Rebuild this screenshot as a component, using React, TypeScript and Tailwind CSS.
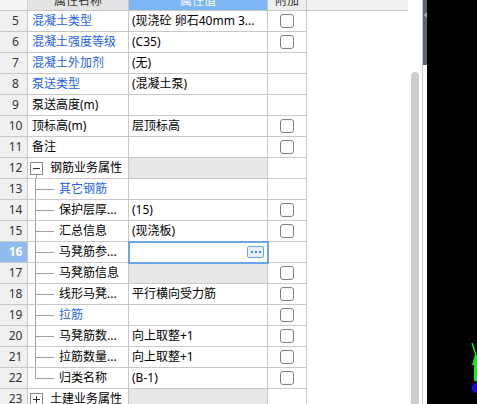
type Row = {
  n: number
  name: string
  value?: string
  blue?: boolean
  check?: boolean
  child?: boolean
  last?: boolean
  group?: 'minus' | 'plus'
  grayValue?: boolean
  selected?: boolean
}

const rows: Row[] = [
  { n: 5, name: '混凝土类型', value: '(现浇砼 卵石40mm 3...', blue: true, check: true },
  { n: 6, name: '混凝土强度等级', value: '(C35)', blue: true, check: true },
  { n: 7, name: '混凝土外加剂', value: '(无)', blue: true },
  { n: 8, name: '泵送类型', value: '(混凝土泵)', blue: true },
  { n: 9, name: '泵送高度(m)' },
  { n: 10, name: '顶标高(m)', value: '层顶标高', check: true },
  { n: 11, name: '备注', check: true },
  { n: 12, name: '钢筋业务属性', group: 'minus', grayValue: true },
  { n: 13, name: '其它钢筋', blue: true, child: true },
  { n: 14, name: '保护层厚...', value: '(15)', check: true, child: true },
  { n: 15, name: '汇总信息', value: '(现浇板)', check: true, child: true },
  { n: 16, name: '马凳筋参...', child: true, selected: true },
  { n: 17, name: '马凳筋信息', grayValue: true, check: true, child: true },
  { n: 18, name: '线形马凳...', value: '平行横向受力筋', check: true, child: true },
  { n: 19, name: '拉筋', blue: true, check: true, child: true },
  { n: 20, name: '马凳筋数...', value: '向上取整+1', check: true, child: true },
  { n: 21, name: '拉筋数量...', value: '向上取整+1', check: true, child: true },
  { n: 22, name: '归类名称', value: '(B-1)', check: true, child: true, last: true },
  { n: 23, name: '土建业务属性', group: 'plus', grayValue: true },
]

function GroupBox({ sign, line }: { sign: 'minus' | 'plus'; line: boolean }) {
  return (
    <div className="ml-[2px] w-[13px] h-full flex flex-col items-center">
      <div className="flex-1" />
      <div className="w-[13px] h-[13px] border border-[#8a8a8a] bg-white flex items-center justify-center relative">
        <div className="w-[7px] h-px bg-[#333]" />
        {sign === 'plus' && <div className="absolute w-px h-[7px] bg-[#333]" />}
      </div>
      <div className={line ? 'flex-1 w-px bg-[#a0a0a0]' : 'flex-1'} />
    </div>
  )
}

function TreeLine({ last }: { last?: boolean }) {
  return (
    <div className="ml-[7px] w-[19px] h-full flex flex-col">
      <div className="flex-1 border-l border-b border-[#a0a0a0]" />
      <div className={last ? 'flex-1' : 'flex-1 border-l border-[#a0a0a0]'} />
    </div>
  )
}

export default function App() {
  return (
    <div
      className="flex w-[477px] h-[404px] overflow-hidden bg-white text-[12px] text-black"
      style={{ fontFamily: '"Noto Sans", "Noto Sans CJK SC", sans-serif' }}
    >
      <div className="w-[408px] h-full flex flex-col overflow-hidden">
        <div className="h-[11px] overflow-hidden border-b border-[#c8c8c8] bg-[#f0f0f0] shrink-0">
          <div className="flex h-[18px] -mt-[8px] items-center leading-none">
            <div className="w-[28px] h-full bg-[#f4f4f4] border-r border-[#d4d4d4]" />
            <div className="w-[101px] h-full bg-[#e4e4e4] border-r border-[#c8c8c8] flex items-center justify-center text-[#333]">
              属性名称
            </div>
            <div className="w-[139px] h-full bg-[#7db6f5] border-r border-[#c8c8c8] flex items-center justify-center text-white">
              属性值
            </div>
            <div className="w-[39px] h-full bg-[#eeeeee] border-r border-[#c8c8c8] flex items-center justify-center text-[#333]">
              附加
            </div>
          </div>
        </div>
        {rows.map((r) => (
          <div key={r.n} className="flex h-[21px] shrink-0 leading-none">
            <div
              className={
                r.selected
                  ? 'w-[28px] h-full border-r border-b border-[#c8c8c8] bg-[#8fbcef] text-white font-bold flex items-center justify-center pl-[4px]'
                  : 'w-[28px] h-full border-r border-b border-[#c8c8c8] bg-[#f0f0f0] text-[#333] flex items-center justify-center pl-[4px]'
              }
            >
              {r.n}
            </div>
            <div className="w-[101px] h-full border-r border-b border-[#c8c8c8] flex items-center whitespace-nowrap">
              {r.group && <GroupBox sign={r.group} line={r.group === 'minus'} />}
              {r.child && <TreeLine last={r.last} />}
              <span
                className={
                  (r.blue ? 'text-[#1f5fe6] ' : 'text-black ') +
                  (r.group ? 'ml-[7px]' : r.child ? 'ml-[5px]' : 'ml-[4px]')
                }
              >
                {r.name}
              </span>
            </div>
            <div
              className={
                r.selected
                  ? 'relative z-10 w-[139px] h-full border-r border-b border-[#c8c8c8] bg-white outline-2 outline-[#6ba7e8] -outline-offset-1 flex items-center justify-end pr-[3px]'
                  : r.grayValue
                    ? 'w-[139px] h-full border-r border-b border-[#c8c8c8] bg-[#e8e8e8]'
                    : 'w-[139px] h-full border-r border-b border-[#c8c8c8] flex items-center pl-[3px] whitespace-nowrap'
              }
            >
              {r.selected ? (
                <div className="w-[17px] h-[12px] rounded-[2px] border border-[#6ba7e8] bg-[#e6f0fc] flex items-center justify-center gap-[2px]">
                  <div className="w-[2px] h-[2px] bg-[#4a8ad8]" />
                  <div className="w-[2px] h-[2px] bg-[#4a8ad8]" />
                  <div className="w-[2px] h-[2px] bg-[#4a8ad8]" />
                </div>
              ) : (
                r.value
              )}
            </div>
            <div className="w-[39px] h-full border-r border-b border-[#c8c8c8] flex items-center justify-center">
              {r.check && <div className="w-[14px] h-[14px] rounded-[3px] border border-[#808080] bg-white" />}
            </div>
          </div>
        ))}
      </div>
      <div className="w-[12px] h-full pl-[3px] pt-[72px]">
        <div className="w-[8px] h-full rounded-t-full bg-[#cdcdcd]" />
      </div>
      <div className="w-[2px] h-full" />
      <div className="w-px h-full bg-[#c8c8c8]" />
      <div className="w-[4px] h-full flex flex-col">
        <div className="h-[65px] bg-[#5c6570] flex flex-col items-center pt-[12px]">
          <div className="w-0 h-0 border-y-[3px] border-y-transparent border-r-[3px] border-r-[#aab2bc]" />
        </div>
      </div>
      <div className="flex-1 h-full bg-black flex flex-col justify-end items-end pb-[11px]">
        <svg width="6" height="50" viewBox="0 0 6 50">
          <path d="M1 0 L5 12 L5 38" stroke="#1ee61e" strokeWidth="1.5" fill="none" />
          <path d="M4 12 L6 12 L6 38 L3 38 L3 22 L1 22 Z" fill="#1ee61e" />
          <ellipse cx="5" cy="45" rx="4" ry="5" fill="#1010d8" />
        </svg>
      </div>
    </div>
  )
}
